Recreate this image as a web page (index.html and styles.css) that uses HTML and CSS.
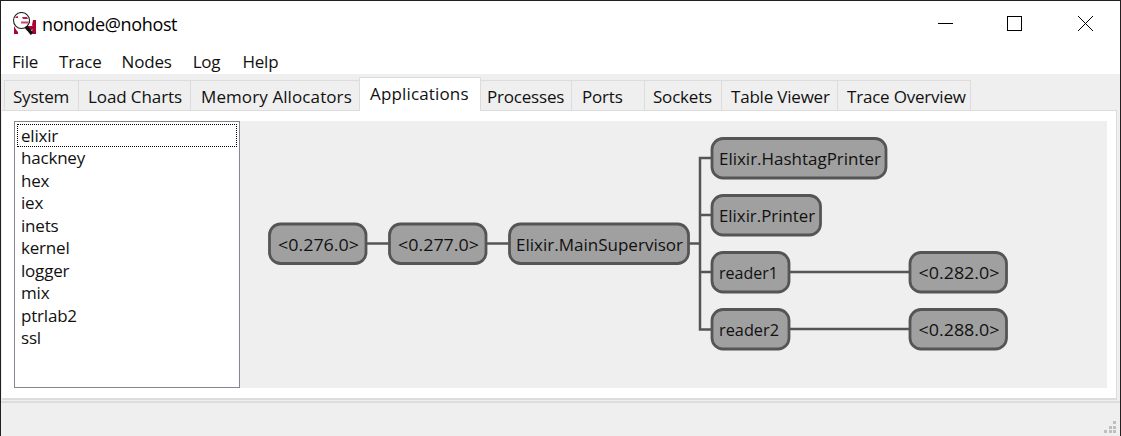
FILE: index.html
```html
<!DOCTYPE html>
<html lang="en">
<head>
<meta charset="utf-8">
<title>nonode@nohost</title>
<link rel="stylesheet" href="styles.css">
</head>
<body>
<div class="window">
  <header class="titlebar">
    <svg class="app-icon" width="24" height="24" viewBox="0 0 24 24">
      <path fill="#a90533" d="M2 14Q4 18 6 20V22H2ZM2 5H4V9H2ZM15 5H17L18 8V11H15ZM21 8H24V22H21L19 20L22 16L20 13ZM13 14H22V17L16 19Q13 18 13 14Z"/>
      <circle cx="9.500" cy="8.500" r="8" fill="#fff" stroke="#222" stroke-width="1.100"/>
      <path d="M3 6Q4 4 6 4V6ZM10 5H15L16 7H11Z" fill="#b5224d"/>
      <path d="M9 9.500H16.500L16 11.500H9Z" fill="#c9466b"/>
      <path d="M14 14.500L20 22" stroke="#111" stroke-width="3.400"/>
    </svg>
    <span class="title">nonode@nohost</span>
    <svg class="controls" width="160" height="20" viewBox="0 0 160 20" fill="none" stroke="#000" shape-rendering="crispEdges">
      <path d="M0 9.500H15M69.500 2.500H83.500V16.500H69.500Z"/>
      <path d="M140 2L155 17M155 2L140 17" shape-rendering="auto"/>
    </svg>
  </header>
  <nav class="menu"><span>File</span><span>Trace</span><span>Nodes</span><span>Log</span><span>Help</span></nav>
  <div class="tabs">
    <div class="tab system"><span>System</span></div>
    <div class="tab charts"><span>Load Charts</span></div>
    <div class="tab memory"><span>Memory Allocators</span></div>
    <div class="tab apps active"><span>Applications</span></div>
    <div class="tab processes"><span>Processes</span></div>
    <div class="tab ports"><span>Ports</span></div>
    <div class="tab sockets"><span>Sockets</span></div>
    <div class="tab table"><span>Table Viewer</span></div>
    <div class="tab trace"><span>Trace Overview</span></div>
  </div>
  <main class="panel">
    <ul class="list">
      <li class="focused">elixir</li><li>hackney</li><li>hex</li><li>iex</li><li>inets</li><li>kernel</li><li>logger</li><li>mix</li><li>ptrlab2</li><li>ssl</li>
    </ul>
    <svg class="tree" width="867" height="267" viewBox="240 121 867 267">
      <path class="edge" d="M366 243.500H390M486 243.500H510M688 243.500H700M712 158H700V329.500H712M700 215H712M700 272H712M788 272H910M788 329H910"/>
      <g class="node">
        <rect x="269.500" y="224" width="96.500" height="39.500" rx="11"/>
        <rect x="389.500" y="224" width="96.500" height="39.500" rx="11"/>
        <rect x="509.500" y="224" width="179" height="39.500" rx="11"/>
        <rect x="712" y="138.500" width="174" height="39.500" rx="11"/>
        <rect x="712" y="195.500" width="108.500" height="39.500" rx="11"/>
        <rect x="712" y="252.500" width="77" height="39.500" rx="11"/>
        <rect x="712" y="309.500" width="77" height="39.500" rx="11"/>
        <rect x="910" y="252.500" width="96.500" height="39.500" rx="11"/>
        <rect x="910" y="309.500" width="96.500" height="39.500" rx="11"/>
      </g>
      <g class="label">
        <text x="278" y="251" textLength="81" lengthAdjust="spacingAndGlyphs">&lt;0.276.0&gt;</text>
        <text x="398" y="251" textLength="81" lengthAdjust="spacingAndGlyphs">&lt;0.277.0&gt;</text>
        <text x="516" y="251" textLength="167" lengthAdjust="spacingAndGlyphs">Elixir.MainSupervisor</text>
        <text x="719" y="165" textLength="162" lengthAdjust="spacingAndGlyphs">Elixir.HashtagPrinter</text>
        <text x="719" y="222" textLength="96" lengthAdjust="spacingAndGlyphs">Elixir.Printer</text>
        <text x="719" y="279" textLength="59" lengthAdjust="spacingAndGlyphs">reader1</text>
        <text x="719" y="336" textLength="60" lengthAdjust="spacingAndGlyphs">reader2</text>
        <text x="918.500" y="279" textLength="81" lengthAdjust="spacingAndGlyphs">&lt;0.282.0&gt;</text>
        <text x="918.500" y="336" textLength="81" lengthAdjust="spacingAndGlyphs">&lt;0.288.0&gt;</text>
      </g>
    </svg>
  </main>
  <footer class="status">
    <svg width="13" height="13" viewBox="0 0 13 13" fill="#bfbfbf" shape-rendering="crispEdges">
      <path d="M9 0h3v3h-3zM5 5h3v3h-3zM9 5h3v3h-3zM0 9h3v3h-3zM5 9h3v3h-3zM9 9h3v3h-3z"/>
    </svg>
  </footer>
</div>
</body>
</html>
```
FILE: styles.css
```css
* { box-sizing: border-box; }
body { margin: 0; font-family: "Open Sans", "Noto Sans", sans-serif; font-size: 17px; color: #111; }
.window { width: 1121px; height: 436px; display: flex; flex-direction: column; overflow: hidden; background: #efefef; border: 1px solid #231f20; border-bottom: 0; }
.titlebar { height: 48px; flex: none; background: #fff; display: flex; align-items: flex-start; padding: 10px 22px 0 11px; }
.app-icon { flex: none; margin-top: 1px; }
.title { font-size: 18px; line-height: 26px; margin-left: 6px; color: #000; letter-spacing: -0.35px; }
.controls { margin: 3px 0 0 auto; }
.menu { height: 25px; flex: none; background: #fff; display: flex; gap: 21px; padding-left: 11px; line-height: 25px; letter-spacing: -0.2px; }
.menu span:nth-child(2) { margin-right: -1px; }
.menu span:nth-child(4) { margin-right: 1px; }
.tabs { height: 36px; flex: none; display: flex; align-items: flex-end; padding-left: 3px; position: relative; z-index: 1; }
.tab { height: 30px; border: 1px solid #dcdcdc; border-left: 0; border-bottom: 0; padding-left: 9px; line-height: 31px; white-space: nowrap; letter-spacing: -0.2px; }
.system { width: 75px; border-left: 1px solid #dcdcdc; padding-left: 8px; }
.charts { width: 112px; letter-spacing: -0.1px; }
.memory { width: 168px; border-right: 0; padding-left: 10px; letter-spacing: 0.1px; }
.apps { width: 122px; padding-left: 10px; letter-spacing: 0.15px; }
.processes { width: 91px; padding-left: 6px; }
.ports { width: 73px; padding-left: 10px; }
.sockets { width: 77px; padding-left: 8px; }
.table { width: 116px; }
.trace { width: 133px; }
.active { height: 34px; margin-bottom: -1px; background: #fff; border-left: 1px solid #dcdcdc; }
.panel { width: 1115px; height: 290px; flex: none; margin-left: 1px; background: #fff; border: solid #dcdcdc; border-width: 1px 1px 2px 0; padding: 10px 9px 0 12px; display: flex; }
.list { width: 226px; height: 267px; flex: none; margin: 0; padding: 1px; list-style: none; border: 1px solid #828790; background: #fff; letter-spacing: -0.2px; }
.list li { height: 22.5px; line-height: 23px; padding: 0 0 0 4px; border: 1px solid transparent; display: flex; align-items: center; }
.list .focused { border: 1px dotted #000; margin: 1px 1px 0; padding-left: 3px; line-height: 21px; }
.tree { flex: none; background: #efefef; }
.edge { fill: none; stroke: #555; stroke-width: 2.5; }
.node { fill: #a0a0a0; stroke: #555; stroke-width: 2.8; }
.label { font-size: 17px; fill: #111; }
.status { flex: 1; border-top: 2px solid #dcdcdc; margin-top: 1px; display: flex; justify-content: flex-end; align-items: flex-end; padding: 0 3px 2px; }
```
